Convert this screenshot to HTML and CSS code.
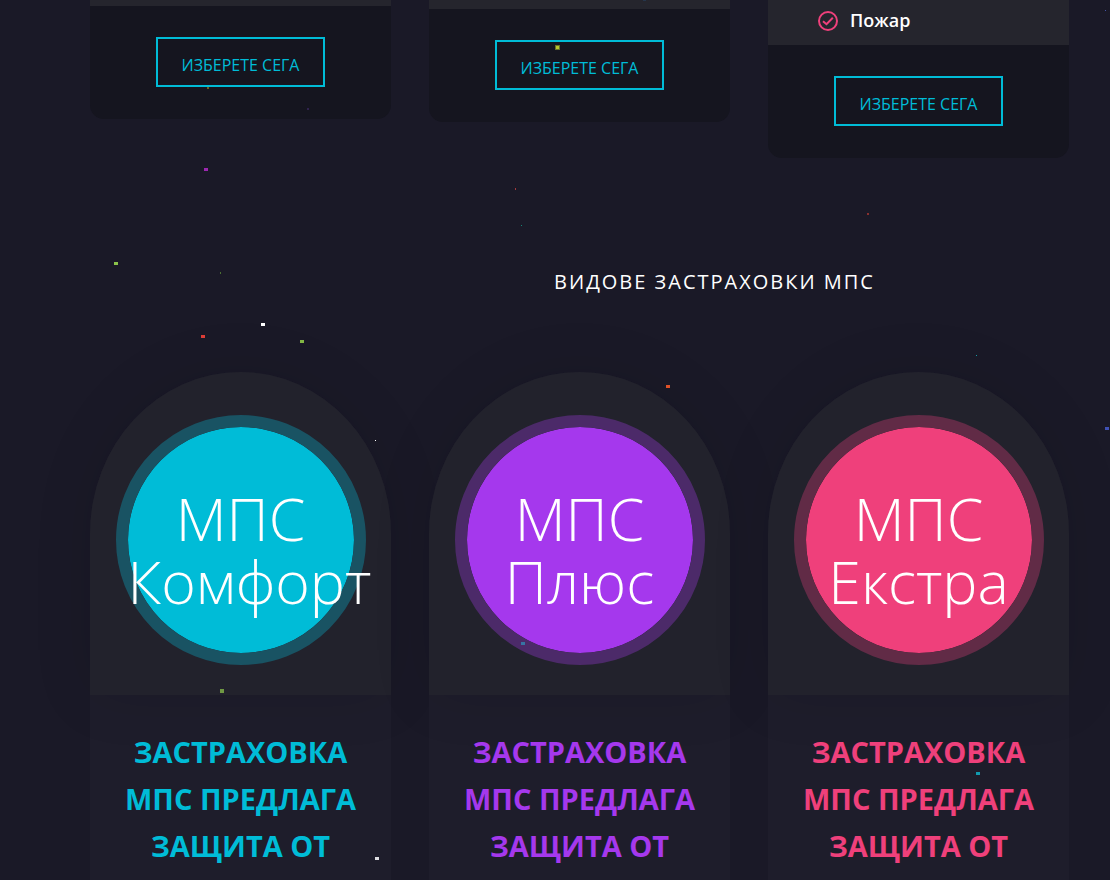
FILE: index.html
```html
<!DOCTYPE html>
<html lang="bg">
<head>
<meta charset="utf-8">
<meta name="viewport" content="width=device-width, initial-scale=1">
<title>Видове застраховки МПС</title>
<link rel="stylesheet" href="styles.css">
</head>
<body>
<main class="page">
  <section class="columns">
    <article class="plan">
      <div class="plan-list plan-list-short"></div>
      <div class="plan-footer"><a class="button" href="#choose">Изберете сега</a></div>
    </article>
    <article class="plan">
      <div class="plan-list plan-list-medium"></div>
      <div class="plan-footer"><a class="button" href="#choose">Изберете сега</a></div>
    </article>
    <article class="plan">
      <ul class="plan-list">
        <li class="plan-item">
          <svg class="check" viewBox="0 0 20 20" aria-hidden="true"><circle cx="10" cy="11" r="9"/><path d="M5 11.2 8.5 14.2 14.8 7.8"/></svg>
          <span>Пожар</span>
        </li>
      </ul>
      <div class="plan-footer"><a class="button" href="#choose">Изберете сега</a></div>
    </article>
  </section>

  <h2 class="section-title">Видове застраховки МПС</h2>

  <section class="columns offers">
    <article class="offer offer-cyan">
      <div class="arch"><h3 class="circle">МПС Комфорт</h3></div>
      <p class="offer-text">Застраховка МПС предлага защита от</p>
    </article>
    <article class="offer offer-purple">
      <div class="arch"><h3 class="circle">МПС Плюс</h3></div>
      <p class="offer-text">Застраховка МПС предлага защита от</p>
    </article>
    <article class="offer offer-pink">
      <div class="arch"><h3 class="circle">МПС Екстра</h3></div>
      <p class="offer-text">Застраховка МПС предлага защита от</p>
    </article>
  </section>

  <svg class="particles" aria-hidden="true">
    <rect x="207" y="87" width="2" height="2" fill="#6b611e"/>
    <rect x="307" y="108" width="2" height="2" fill="#30234f"/>
    <rect x="204" y="168" width="4" height="3" fill="#9c27b0"/>
    <rect x="555" y="45" width="5" height="5" fill="#667028"/>
    <rect x="556" y="46" width="3" height="3" fill="#b7c52f"/>
    <rect x="643" y="0" width="3" height="1" fill="#25354b"/>
    <rect x="515" y="188" width="1" height="2" fill="#a33a3d"/>
    <rect x="521" y="225" width="1" height="1" fill="#158576"/>
    <rect x="867" y="213" width="2" height="2" fill="#88302f"/>
    <rect x="1105" y="10" width="1" height="1" fill="#4454a8"/>
    <rect x="114" y="262" width="4" height="3" fill="#8bc34a"/>
    <rect x="220" y="272" width="1" height="2" fill="#4b7032"/>
    <rect x="261" y="323" width="4" height="3" fill="#ffffff"/>
    <rect x="201" y="335" width="4" height="3" fill="#dc3c36"/>
    <rect x="300" y="340" width="4" height="3" fill="#83b744"/>
    <rect x="666" y="385" width="4" height="3" fill="#df5128"/>
    <rect x="976" y="355" width="1" height="1" fill="#159aa5"/>
    <rect x="375" y="440" width="1" height="1" fill="#ffffff"/>
    <rect x="1105" y="427" width="4" height="3" fill="#3f51b5"/>
    <rect x="521" y="642" width="4" height="3" fill="#3774a3"/>
    <rect x="220" y="689" width="4" height="4" fill="#6f9843"/>
    <rect x="375" y="857" width="4" height="3" fill="#dedee2"/>
    <rect x="976" y="772" width="4" height="3" fill="#119aae"/>
  </svg>
</main>
</body>
</html>
```
FILE: styles.css
```css
*,
*::before,
*::after {
  box-sizing: border-box;
}

body {
  margin: 0;
  background: #1a1927;
  color: #fff;
  font-family: "Open Sans", "Noto Sans", sans-serif;
}

.page {
  position: relative;
  display: flex;
  flex-direction: column;
  min-height: 100vh;
  overflow: hidden;
}

.columns {
  display: grid;
  grid-template-columns: repeat(3, minmax(0, 1fr));
  gap: 38px;
  align-items: start;
  padding: 0 41px 0 90px;
}

.offers {
  flex: 1;
  align-items: stretch;
}

.plan {
  overflow: hidden;
  border-radius: 0 0 14px 14px;
  background: #15151f;
}

.plan-list {
  margin: 0;
  padding: 6px 50px 11px;
  background: #25252d;
  list-style: none;
}

.plan-list-short {
  padding: 6px 0 0;
}

.plan-list-medium {
  padding: 9px 0 0;
}

.plan-item {
  display: flex;
  align-items: center;
  gap: 12px;
  font-size: 18px;
  font-weight: 600;
  line-height: 28px;
}

.check {
  width: 20px;
  height: 20px;
  overflow: visible;
  fill: none;
  stroke: #ef407b;
  stroke-width: 2;
}

.plan-footer {
  display: flex;
  justify-content: center;
  padding: 31px 20px 32px;
}

.button {
  padding: 14px 24px 8px;
  border: 2px solid #00bcd7;
  color: #00bcd7;
  font-size: 16px;
  font-weight: 400;
  line-height: 24px;
  text-decoration: none;
  text-transform: uppercase;
}

.section-title {
  margin: 108px 41px 74px 360px;
  font-size: 20px;
  font-weight: 500;
  letter-spacing: 2px;
  line-height: 32px;
  text-align: center;
  text-transform: uppercase;
}

.offer {
  --accent: #00bcd7;
  --ring: #195363;
  background: #1e1d2b;
  border-radius: 150px 150px 0 0 / 162px 162px 0 0;
}

.offer-purple {
  --accent: #a538ed;
  --ring: #4c2a69;
}

.offer-pink {
  --accent: #ef407b;
  --ring: #612b46;
}

.arch {
  display: flex;
  justify-content: center;
  padding: 43px 0 30px;
  border-radius: 50% 50% 0 0;
  background: #22222c;
  box-shadow: 0 0 60px rgba(0, 0, 0, 0.1);
}

.circle {
  width: 250px;
  height: 250px;
  margin: 0;
  padding: 60px 0 0;
  border: 12px solid var(--ring);
  border-radius: 50%;
  background: var(--accent);
  background-clip: padding-box;
  font-size: 59px;
  font-weight: 300;
  line-height: 63px;
  text-align: center;
}

.offer-text {
  margin: 0;
  padding: 33px 24px 0;
  color: var(--accent);
  font-size: 29px;
  font-weight: 700;
  line-height: 47px;
  text-align: center;
  text-transform: uppercase;
}

.particles {
  position: absolute;
  inset: 0;
  width: 100%;
  height: 100%;
  pointer-events: none;
}
```
